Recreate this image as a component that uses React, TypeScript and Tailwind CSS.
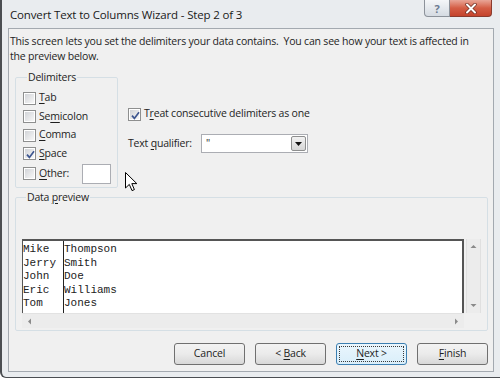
import React from 'react';

// Win7-style checkbox
function CheckBox({ checked = false }: { checked?: boolean }) {
  return (
    <span className="relative w-[13px] h-[13px] shrink-0 border border-[#8e8f8f] bg-white p-[1px] flex">
      <span className="w-full h-full bg-linear-to-br from-[#d2d4d8] to-[#f7f7f7]" />
      {checked && (
        <svg className="absolute left-[1px] top-[1px]" width="11" height="11" viewBox="0 0 11 11">
          <path d="M2 5.6 L4.4 8.4 L9 2.2" fill="none" stroke="#3d5690" strokeWidth="1.7" />
        </svg>
      )}
    </span>
  );
}

function Mn({ children }: { children: React.ReactNode }) {
  return <span className="underline underline-offset-[2px] decoration-[1px]">{children}</span>;
}

function Btn({ children, focused = false }: { children: React.ReactNode; focused?: boolean }) {
  return (
    <button
      className={
        focused
          ? 'w-[71px] h-[22px] rounded-[3px] border border-[#3c7fb1] bg-linear-to-b from-[#eaf6fd] to-[#d9eefa] p-[2px] text-[#1e1e1e]'
          : 'w-[71px] h-[22px] rounded-[3px] border border-[#707070] bg-linear-to-b from-[#f3f3f3] via-[#ebebeb] to-[#d8d8d8] text-[#1e1e1e]'
      }
    >
      {focused ? (
        <span className="w-full h-full border border-dotted border-[#3a3a3a] flex items-center justify-center">{children}</span>
      ) : (
        children
      )}
    </button>
  );
}

function Arrow({ dir }: { dir: 'up' | 'down' | 'left' | 'right' }) {
  const d = {
    up: 'M0.5 4 L3.5 1 L6.5 4 Z',
    down: 'M0.5 1 L3.5 4 L6.5 1 Z',
    left: 'M4 0.5 L1 3.5 L4 6.5 Z',
    right: 'M1 0.5 L4 3.5 L1 6.5 Z',
  }[dir];
  const size = dir === 'up' || dir === 'down' ? { w: 7, h: 5 } : { w: 5, h: 7 };
  return (
    <svg width={size.w} height={size.h} viewBox={`0 0 ${size.w} ${size.h}`}>
      <path d={d} fill="#8a8a8a" />
    </svg>
  );
}

const rows = [
  ['Mike', 'Thompson'],
  ['Jerry', 'Smith'],
  ['John', 'Doe'],
  ['Eric', 'Williams'],
  ['Tom', 'Jones'],
];

export default function App() {
  return (
    <div className="w-[500px] h-[380px] bg-white overflow-hidden font-['Open_Sans',sans-serif] text-[10.5px] tracking-[-0.2px] text-[#1e1e1e]">
      <div className="relative w-[500px] h-[378px] bg-[#e9ecef] border-l-2 border-b border-[#4b4e52] rounded-bl-[6px] flex flex-col px-[6px]">
        {/* title bar */}
        <div className="h-[28px] flex items-start shrink-0">
          <div className="pt-[7px] pl-[2px] text-[11.5px] tracking-[-0.15px] leading-[15px] text-[#1a1a1a]">
            Convert Text to Columns Wizard - Step 2 of 3
          </div>
          <div className="ml-auto flex mr-[2px]">
            <div className="w-[26px] h-[17px] rounded-bl-[4px] border border-t-0 border-[#8c929a] bg-linear-to-b from-[#f4f6f8] to-[#d5dbe2] flex items-center justify-center text-[#6b7a90] text-[11px] font-bold leading-none">
              ?
            </div>
            <div className="w-[42px] h-[17px] rounded-br-[4px] border border-t-0 border-l-0 border-[#8a3b2e] bg-linear-to-b from-[#e8a597] via-[#d45d45] to-[#c4432c] flex items-center justify-center">
              <svg width="14" height="11" viewBox="0 0 14 11">
                <path d="M3 1.5 L11 9.5 M11 1.5 L3 9.5" stroke="#6b2a20" strokeWidth="3.4" strokeLinecap="round" />
                <path d="M3 1.5 L11 9.5 M11 1.5 L3 9.5" stroke="#ffffff" strokeWidth="2" strokeLinecap="round" />
              </svg>
            </div>
          </div>
        </div>

        {/* content panel */}
        <div className="relative h-[344px] border border-[#a3a9b0] bg-[#f0f0f0] flex flex-col">
          <p className="w-[466px] pt-[5px] pl-[1px] leading-[15px]">
            This screen lets you set the delimiters your data contains.&nbsp; You can see how your text is affected in the preview below.
          </p>

          <div className="mt-[7px] ml-[6px] flex">
            <fieldset className="w-[103px] h-[117px] border border-[#d5dfe5] rounded-[2px] pl-[7px] pt-[5px]">
              <legend className="ml-[4px] px-[1px] leading-[13px]">Delimiters</legend>
              <div className="flex flex-col">
                {[
                  ['', 'T', 'ab', false],
                  ['Se', 'm', 'icolon', false],
                  ['', 'C', 'omma', false],
                  ['', 'S', 'pace', true],
                ].map(([a, m, b, c]) => (
                  <label key={String(a) + String(m)} className="h-[18.5px] flex items-center gap-[3px]">
                    <CheckBox checked={Boolean(c)} />
                    <span>
                      {a}
                      <Mn>{m}</Mn>
                      {b}
                    </span>
                  </label>
                ))}
                <label className="h-[21px] flex items-center gap-[3px]">
                  <CheckBox />
                  <span className="w-[40px]">
                    <Mn>O</Mn>ther:
                  </span>
                  <span className="w-[29px] h-[20px] border border-[#abadb3] bg-white" />
                </label>
              </div>
            </fieldset>

            <div className="ml-[10px] pt-[36px] flex flex-col">
              <label className="h-[14px] flex items-center gap-[3px]">
                <CheckBox checked />
                <span>
                  T<Mn>r</Mn>eat consecutive delimiters as one
                </span>
              </label>
              <div className="mt-[13px] flex items-center">
                <span className="w-[73px]">
                  Text <Mn>q</Mn>ualifier:
                </span>
                <div className="w-[107px] h-[19px] border border-[#abadb3] bg-white flex items-center">
                  <span className="flex-1 pl-[4px] leading-none">"</span>
                  <span className="w-[15px] h-[15px] mr-[1px] border border-[#8e8f8f] rounded-[2px] bg-linear-to-b from-[#f2f2f2] to-[#d6d6d6] flex items-center justify-center">
                    <svg width="7" height="4" viewBox="0 0 7 4">
                      <path d="M0 0 L7 0 L3.5 4 Z" fill="#111" />
                    </svg>
                  </span>
                </div>
              </div>
            </div>
          </div>

          <fieldset className="mt-[3px] ml-[6px] w-[473px] h-[140px] border border-[#d5dfe5] rounded-[2px] px-[6px] pt-[35px]">
            <legend className="ml-[4px] px-[1px] leading-[13px]">
              Data <Mn>p</Mn>review
            </legend>
            <div className="flex">
              <div className="w-[442px] flex flex-col">
                <div className="relative h-[74px] bg-white border-t-2 border-l border-r-2 border-[#555] overflow-hidden font-['Liberation_Mono',monospace] text-[11px] tracking-normal leading-[13.5px] text-[#222] pt-[2px]">
                  <div className="absolute left-[40px] top-0 bottom-0 w-px bg-[#222]" />
                  {rows.map(([a, b]) => (
                    <div key={a} className="flex">
                      <span className="w-[41px]">{a}</span>
                      <span>{b}</span>
                    </div>
                  ))}
                </div>
                <div className="h-[15px] bg-[#ececec] border-t border-[#e2e2e2] flex items-center justify-between px-[5px]">
                  <Arrow dir="left" />
                  <Arrow dir="right" />
                </div>
              </div>
              <div className="ml-[2px] w-[15px] h-[74px] bg-[#ececec] border-x border-[#e0e0e0] flex flex-col items-center justify-between py-[5px]">
                <Arrow dir="up" />
                <Arrow dir="down" />
              </div>
            </div>
          </fieldset>

          <div className="mt-[12px] pr-[5px] flex justify-end gap-[10px]">
            <Btn>Cancel</Btn>
            <Btn>
              &lt; <Mn>B</Mn>ack
            </Btn>
            <Btn focused>
              <Mn>N</Mn>ext &gt;
            </Btn>
            <Btn>
              <Mn>F</Mn>inish
            </Btn>
          </div>

          {/* mouse pointer */}
          <svg className="absolute left-[116px] top-[143px]" width="13" height="20" viewBox="0 0 13 20">
            <path d="M0.5 0.5 L0.5 16 L4.3 12.4 L7 18.6 L9.4 17.6 L6.8 11.6 L11.8 11.6 Z" fill="#fff" stroke="#000" strokeWidth="1" strokeLinejoin="round" />
          </svg>
        </div>
      </div>
    </div>
  );
}
